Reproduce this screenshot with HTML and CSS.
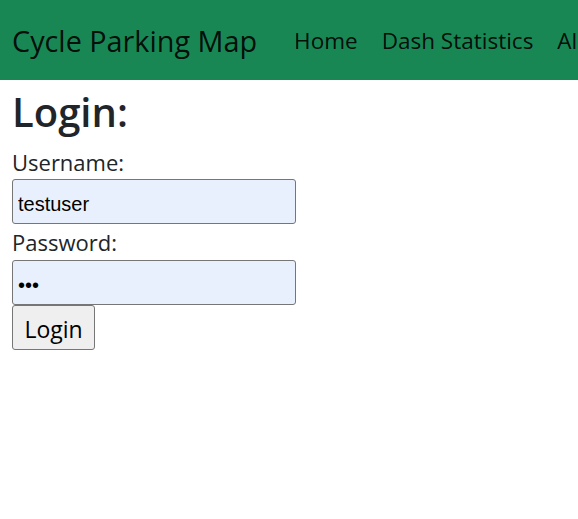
FILE: index.html
```html
<!DOCTYPE html>
<html lang="en">
<head>
<meta charset="utf-8">
<title>Login</title>
<link rel="stylesheet" href="styles.css">
</head>
<body>
<nav class="navbar">
  <span class="brand">Cycle Parking Map</span>
  <ul class="nav-links">
    <li>Home</li>
    <li>Dash Statistics</li>
    <li>All Parking</li>
  </ul>
</nav>
<main class="content">
  <h1 class="title">Login:</h1>
  <form class="login-form">
    <label class="field-label" for="u">Username:</label>
    <input class="field-input" id="u" type="text" value="testuser">
    <label class="field-label" for="p">Password:</label>
    <input class="field-input" id="p" type="password" value="abc">
    <div class="actions"><button class="btn" type="button">Login</button></div>
  </form>
</main>
</body>
</html>
```
FILE: styles.css
```css
html, body {
  margin: 0;
  padding: 0;
  overflow: hidden;
}
body {
  font-family: "Open Sans", "Noto Sans", sans-serif;
  color: #212529;
  background: #fff;
  width: 578px;
  height: 519px;
}
.navbar {
  background: #198754;
  height: 80px;
  display: flex;
  align-items: center;
  padding: 0 12px;
  white-space: nowrap;
  overflow: hidden;
}
.brand {
  font-size: 28.8px;
  color: rgba(0, 0, 0, 0.9);
  margin-right: 25px;
}
.nav-links {
  list-style: none;
  margin: 0;
  padding: 0;
  display: flex;
}
.nav-links li {
  font-size: 22.5px;
  color: rgba(0, 0, 0, 0.9);
  padding: 0 12px;
}
.content {
  padding: 0 12px;
}
.title {
  margin: 0;
  font-size: 40px;
  font-weight: 600;
  line-height: 64px;
  height: 64px;
}
.login-form {
  display: flex;
  flex-direction: column;
  align-items: flex-start;
}
.field-label {
  font-size: 22px;
  line-height: 36px;
  height: 35px;
}
.field-label + .field-input + .field-label {
  height: 36px;
}
.field-input {
  box-sizing: border-box;
  width: 284px;
  height: 45px;
  margin: 0;
  border: 1px solid #767676;
  border-radius: 3px;
  background: #e8f0fe;
  font-family: "Liberation Sans", Arial, sans-serif;
  font-size: 20px;
  padding: 6px 5px 0;
  color: #000;
}
.btn {
  box-sizing: border-box;
  height: 45px;
  width: 83px;
  margin: 0;
  border: 1px solid #767676;
  border-radius: 3px;
  background: #efefef;
  font-family: "Open Sans", "Noto Sans", sans-serif;
  font-size: 23px;
  color: #000;
  padding: 2px 0 0;
}
```
